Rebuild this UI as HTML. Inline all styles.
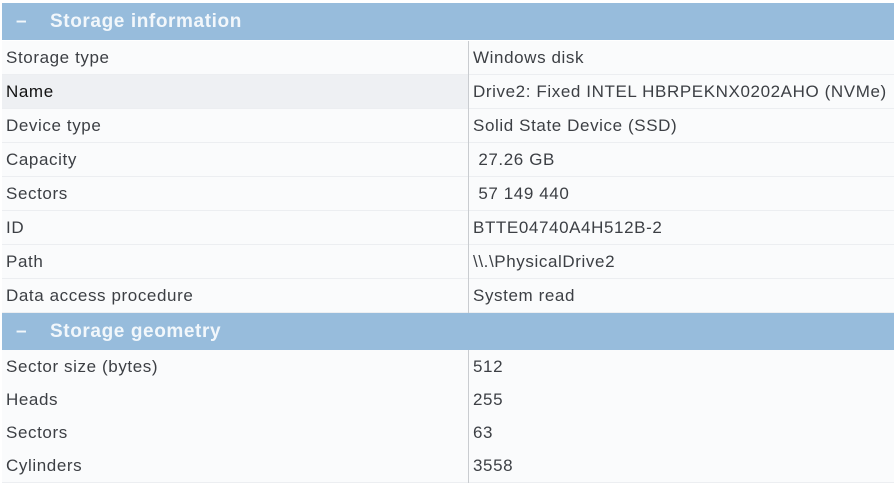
<!DOCTYPE html>
<html><head><style>
body{margin:0;width:894px;height:483px;background:#fff;overflow:hidden;font-family:"Liberation Sans","DejaVu Sans",sans-serif;}
.h{position:absolute;left:2px;width:892px;height:37px;background:#97bcdc;color:#f2f7fb;font-weight:bold;font-size:19px;letter-spacing:0.6px;line-height:37px;}
.h span.m{position:absolute;left:14px;}
.h span.t{position:absolute;left:48px;}
.r{position:absolute;left:2px;width:892px;height:33px;background:#fafbfc;border-bottom:1px solid #eceef1;font-size:17px;letter-spacing:0.6px;color:#3c3f44;line-height:33px;}
.r .a{position:absolute;left:4px;top:0;width:462px;height:33px;}
.r .b{position:absolute;left:471px;top:0;}
.r .d{position:absolute;left:466px;top:0;width:1px;height:34px;background:#c9ccd0;}
.sel .a{background:#eef0f3;color:#111;}
</style></head><body>
<div class="h" style="top:3px"><span class="m">–</span><span class="t">Storage information</span></div>
<div class="r" style="top:41px"><div class="a">Storage type</div><div class="d"></div><div class="b">Windows disk</div></div>
<div class="r sel" style="top:75px"><div class="a" style="left:0;padding-left:4px;width:462px">Name</div><div class="d"></div><div class="b">Drive2: Fixed INTEL HBRPEKNX0202AHO (NVMe)</div></div>
<div class="r" style="top:109px"><div class="a">Device type</div><div class="d"></div><div class="b">Solid State Device (SSD)</div></div>
<div class="r" style="top:143px"><div class="a">Capacity</div><div class="d"></div><div class="b">&nbsp;27.26 GB</div></div>
<div class="r" style="top:177px"><div class="a">Sectors</div><div class="d"></div><div class="b">&nbsp;57 149 440</div></div>
<div class="r" style="top:211px"><div class="a">ID</div><div class="d"></div><div class="b">BTTE04740A4H512B-2</div></div>
<div class="r" style="top:245px"><div class="a">Path</div><div class="d"></div><div class="b">\\.\PhysicalDrive2</div></div>
<div class="r" style="top:279px"><div class="a">Data access procedure</div><div class="d"></div><div class="b">System read</div></div>
<div class="h" style="top:313px"><span class="m">–</span><span class="t">Storage geometry</span></div>
<div class="r" style="top:350px"><div class="a">Sector size (bytes)</div><div class="d"></div><div class="b">512</div></div>
<div class="r" style="top:383px"><div class="a">Heads</div><div class="d"></div><div class="b">255</div></div>
<div class="r" style="top:416px"><div class="a">Sectors</div><div class="d"></div><div class="b">63</div></div>
<div class="r" style="top:449px"><div class="a">Cylinders</div><div class="d"></div><div class="b">3558</div></div>
</body></html>
